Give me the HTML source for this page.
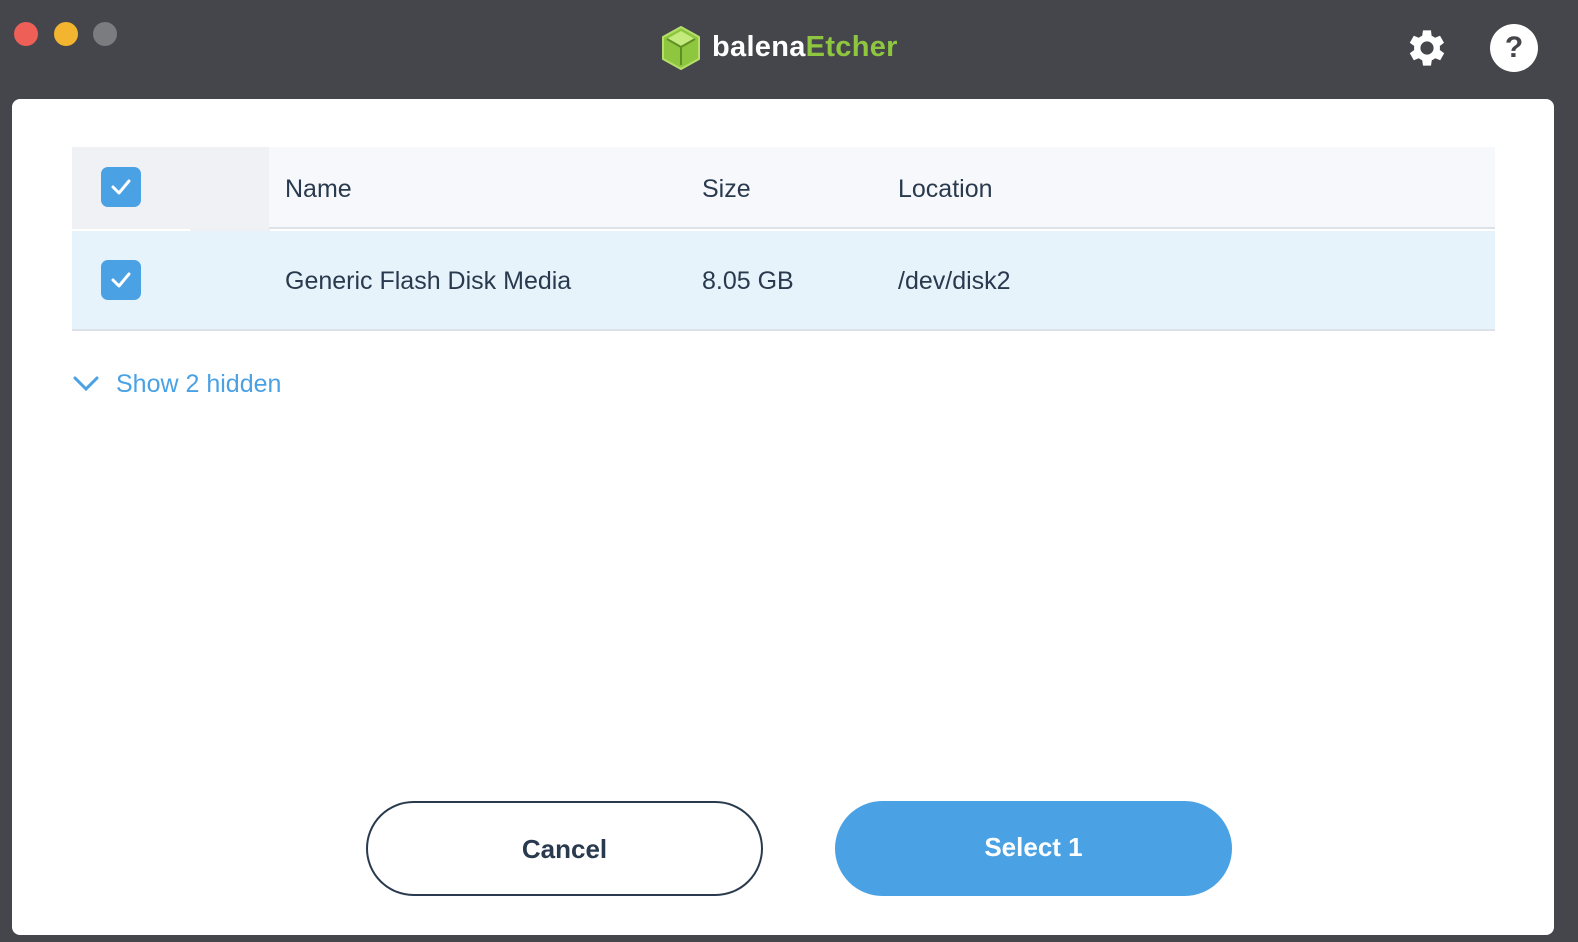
<!DOCTYPE html>
<html><head><meta charset="utf-8"><style>
*{margin:0;padding:0;box-sizing:border-box}
html,body{width:1578px;height:942px;overflow:hidden;background:#45464c;font-family:"Liberation Sans",sans-serif}
.dot{position:absolute;top:22px;width:24px;height:24px;border-radius:50%}
.card{position:absolute;left:12px;top:99px;width:1542px;height:836px;background:#fff;border-radius:8px}
.t{position:absolute;color:#2a3a4e;font-size:25px}
.cb{position:absolute;left:101px;width:40px;height:40px;border-radius:7px;background:#4aa1e3}
.cb svg{position:absolute;left:0;top:0}
.btn{position:absolute;top:801px;width:397px;height:95px;border-radius:48px;font-size:26px;font-weight:bold;text-align:center;line-height:93px}
</style></head><body>
<div class="dot" style="left:14px;background:#ed5f57"></div>
<div class="dot" style="left:54px;background:#f3b52f"></div>
<div class="dot" style="left:93px;background:#7b7c80"></div>
<svg style="position:absolute;left:660px;top:25px" width="42" height="46" viewBox="0 0 42 46">
<path d="M21 2 L39 12 L39 34 L21 44 L3 34 L3 12 Z" fill="#8fc63f" stroke="#b6e06a" stroke-width="2" stroke-linejoin="round"/>
<path d="M21 6 L35 14 L21 22 L7 14 Z" fill="#c4ea7e"/>
<path d="M21 22 L21 40 M21 22 L35 14 M21 22 L7 14" stroke="#5e8f22" stroke-width="2" fill="none"/>
</svg>
<div style="position:absolute;left:712px;top:31px;font-size:29px;font-weight:bold;color:#fff;letter-spacing:0.3px">balena<span style="color:#8fc63f">Etcher</span></div>
<svg style="position:absolute;left:1403px;top:24px" width="48" height="48" viewBox="0 0 24 24"><path fill="#fff" d="M19.4 13a7.5 7.5 0 0 0 0-2l2.1-1.6-2-3.5-2.5 1a7.6 7.6 0 0 0-1.7-1L15 3.2h-4l-.4 2.7a7.6 7.6 0 0 0-1.7 1l-2.5-1-2 3.5L6.6 11a7.5 7.5 0 0 0 0 2l-2.2 1.6 2 3.5 2.5-1a7.6 7.6 0 0 0 1.7 1l.4 2.7h4l.4-2.7a7.6 7.6 0 0 0 1.7-1l2.5 1 2-3.5zM13 15.3a3.3 3.3 0 1 1 0-6.6 3.3 3.3 0 0 1 0 6.6z" transform="translate(-1 0)"/></svg>
<div style="position:absolute;left:1490px;top:24px;width:48px;height:48px;border-radius:50%;background:#fff;color:#45464c;font-weight:bold;font-size:30px;text-align:center;line-height:48px">?</div>
<div class="card">
 <div style="position:absolute;left:60px;top:48px;width:1423px;height:82px;background:#f6f8fb;border-bottom:2px solid #dde1ea"></div>
 <div style="position:absolute;left:60px;top:48px;width:197px;height:82px;background:#eff1f5"></div>
 <div style="position:absolute;left:178px;top:130px;width:80px;height:2px;background:#eef0f4"></div>
 <div style="position:absolute;left:60px;top:132px;width:1423px;height:100px;background:#e6f3fb;border-bottom:2px solid #dde1ea"></div>
</div>
<div class="cb" style="top:167px"><svg width="40" height="40"><path d="M12 20l6 6 10-12" stroke="#fff" stroke-width="3" fill="none" stroke-linecap="round" stroke-linejoin="round"/></svg></div>
<div class="cb" style="top:260px"><svg width="40" height="40"><path d="M12 20l6 6 10-12" stroke="#fff" stroke-width="3" fill="none" stroke-linecap="round" stroke-linejoin="round"/></svg></div>
<div class="t" style="left:285px;top:175px">Name</div>
<div class="t" style="left:702px;top:175px">Size</div>
<div class="t" style="left:898px;top:175px">Location</div>
<div class="t" style="left:285px;top:267px">Generic Flash Disk Media</div>
<div class="t" style="left:702px;top:267px">8.05 GB</div>
<div class="t" style="left:898px;top:267px">/dev/disk2</div>
<svg style="position:absolute;left:72px;top:374px" width="28" height="20"><path d="M3 4l11 11 11-11" stroke="#4aa1e3" stroke-width="3" fill="none" stroke-linecap="round"/></svg>
<div class="t" style="left:116px;top:370px;color:#4aa1e3">Show 2 hidden</div>
<div class="btn" style="left:366px;border:2px solid #2a3a4e;color:#2a3a4e;background:#fff">Cancel</div>
<div class="btn" style="left:835px;background:#4aa1e3;color:#fff">Select 1</div>
</body></html>
